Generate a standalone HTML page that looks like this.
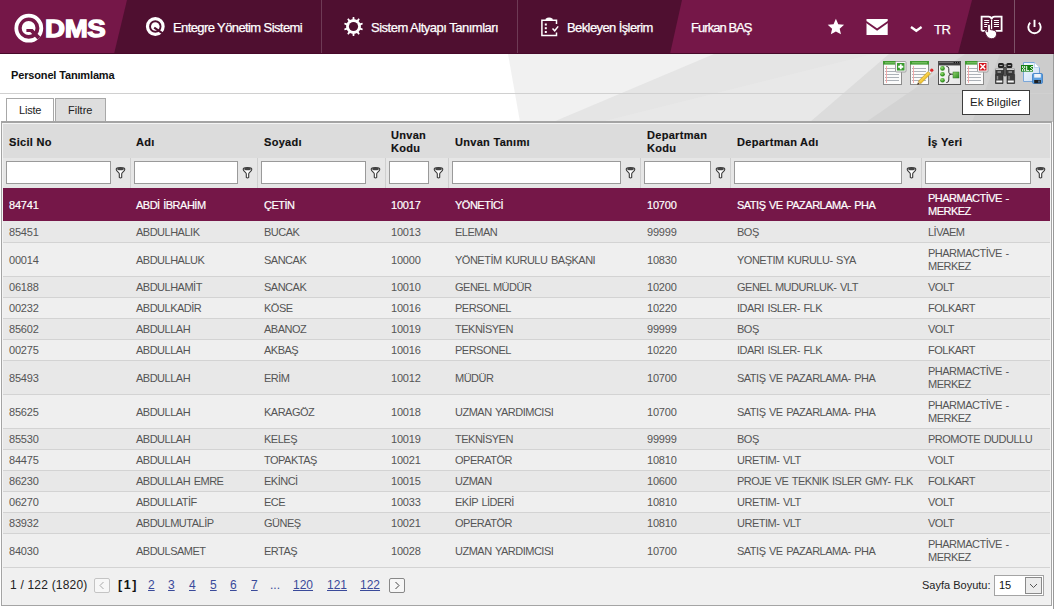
<!DOCTYPE html>
<html><head><meta charset="utf-8">
<style>
*{margin:0;padding:0;box-sizing:border-box}
html,body{width:1054px;height:609px;overflow:hidden;background:#fff;font-family:"Liberation Sans",sans-serif}
.a{position:absolute}
#hdr{position:absolute;left:0;top:0;width:1054px;height:54px;background:#4f0f30;overflow:hidden}
.mt{position:absolute;color:#fff;font-size:13px;white-space:nowrap;letter-spacing:-0.6px;top:20px;line-height:16px;-webkit-text-stroke:0.25px #fff}
.sep{position:absolute;top:0;width:1px;height:54px;background:#6e3a55}
#bg{position:absolute;left:0;top:54px;width:1054px;height:555px}
.tb{position:absolute;left:1px;top:121px;width:1051px;height:485px;border:1px solid #a4a4a4;border-top:2px solid #a4a4a4;background:#f0f0f0}
.th{position:absolute;top:123px;height:35px;background:#dcdcdc}
.hl{position:absolute;font-weight:bold;font-size:11px;color:#111;line-height:13px;white-space:nowrap;letter-spacing:0.3px;-webkit-text-stroke:0.15px #111}
.fr{position:absolute;top:158px;height:30px;background:#e6e6e6}
.inp{position:absolute;top:161px;height:23px;background:#fff;border:1px solid #9a9a9a}
.csep{position:absolute;width:1px;background:#cfcfcf}
.row{position:absolute;left:3px;width:1047px;border-bottom:1px solid #d3d3d3}
.c{position:absolute;font-size:11px;color:#555;white-space:nowrap;line-height:13px;letter-spacing:-0.5px;word-spacing:1px}
.n{letter-spacing:-0.2px}
.sel .c{color:#fff;-webkit-text-stroke:0.2px #fff}
.pg{position:absolute;top:578px;font-size:12px;color:#3a4a9a;line-height:14px;text-decoration:underline}
</style></head><body>
<div id="hdr">
  <svg class="a" style="left:0;top:0" width="1054" height="54">
    <polygon points="0,0 127,0 114,54 0,54" fill="#751748"/>
    <polygon points="682,0 972,0 958,54 670,54" fill="#751748"/>
  </svg>
  
  <svg class="a" style="left:0;top:0" width="1054" height="54">
    <!-- logo Q -->
    <circle cx="28.8" cy="28.2" r="12.5" fill="none" stroke="#fff" stroke-width="3.8"/>
    <circle cx="28.6" cy="28" r="6.9" fill="#fff"/>
    <path d="M26.4 29 H32.6 L40.5 36.8 L37.6 39.6 L30.2 32 H26.4 Z" fill="#751748"/>
    <text transform="translate(45,37) scale(1.13,1)" x="0" y="0" font-family="Liberation Sans" font-weight="bold" font-size="24.5" fill="#fff" stroke="#fff" stroke-width="1.3" letter-spacing="-0.3">DMS</text>
    <!-- menu Q -->
    <circle cx="155.3" cy="26.5" r="7.8" fill="none" stroke="#fff" stroke-width="3.2"/>
    <circle cx="155.3" cy="26.5" r="4.3" fill="#fff"/>
    <path d="M154.2 27.6 L164.5 34.6" stroke="#4f0f30" stroke-width="2.2"/>
    <!-- gear -->
    <path d="M352.48,19.17 L352.72,16.93 L354.28,16.93 L354.52,19.17 L355.79,19.46 L356.98,19.97 L358.49,18.30 L359.76,19.22 L358.63,21.17 L359.49,22.15 L360.16,23.27 L362.36,22.80 L362.84,24.29 L360.79,25.20 L360.90,26.50 L360.79,27.80 L362.84,28.71 L362.36,30.20 L360.16,29.73 L359.49,30.85 L358.63,31.83 L359.76,33.78 L358.49,34.70 L356.98,33.03 L355.79,33.54 L354.52,33.83 L354.28,36.07 L352.72,36.07 L352.48,33.83 L351.21,33.54 L350.02,33.03 L348.51,34.70 L347.24,33.78 L348.37,31.83 L347.51,30.85 L346.84,29.73 L344.64,30.20 L344.16,28.71 L346.21,27.80 L346.10,26.50 L346.21,25.20 L344.16,24.29 L344.64,22.80 L346.84,23.27 L347.51,22.15 L348.37,21.17 L347.24,19.22 L348.51,18.30 L350.02,19.97 L351.21,19.46 Z" fill="#fff"/>
    <circle cx="353.5" cy="26.5" r="4.6" fill="#4f0f30"/>
    <!-- clipboard -->
    <path d="M556.5 24 V20.2 H541.9 V35.5 H556.5 V32.5" fill="none" stroke="#fff" stroke-width="1.5"/>
    <path d="M545.6 20.5 V18.8 Q549 16.2 552.7 18.8 V20.5 Z" fill="#fff"/>
    <rect x="544.8" y="23.5" width="2" height="2" fill="#fff"/>
    <rect x="544.8" y="27.2" width="2" height="2" fill="#fff"/>
    <rect x="544.8" y="31" width="2" height="2" fill="#fff"/>
    <path d="M552.5 28.5 L554.7 30.8 L558.2 26.4" fill="none" stroke="#fff" stroke-width="1.5"/>
    <!-- star -->
    <polygon points="835.90,18.80 838.25,24.16 844.08,24.74 839.70,28.64 840.95,34.36 835.90,31.40 830.85,34.36 832.10,28.64 827.72,24.74 833.55,24.16" fill="#fff"/>
    <!-- mail -->
    <rect x="866.5" y="19" width="21.2" height="16" fill="#fff"/>
    <path d="M866 21.8 L877.1 29.6 L888.2 21.8" fill="none" stroke="#751748" stroke-width="1.8"/>
    <!-- chevron -->
    <path d="M911 27 L916.3 30.8 L921.6 27" fill="none" stroke="#fff" stroke-width="2.3"/>
    <!-- book -->
    <path d="M981.6 30.8 V16.6 H988.5 Q991.2 16.6 991.6 19.2 Q992 16.6 994.7 16.6 H1001.6 V30.8 H995.5 M987.2 30.8 H981.6" fill="none" stroke="#fff" stroke-width="1.8"/>
    <path d="M991.6 19.5 V29.5" stroke="#fff" stroke-width="1.2"/>
    <path d="M984.2 20.5 H989.2 M984.2 22.5 H989.2 M984.2 24.5 H987.4 M984.2 26.5 H987.4 M993.9 20.5 H999 M993.9 22.5 H999 M993.9 24.5 H999 M993.9 26.5 H999" stroke="#fff" stroke-width="1"/>
    <path d="M987.6 25 Q989 23.2 990.4 25 V29.6 L992.8 30 Q996.8 30.8 996.6 34.2 Q996 38.8 991.2 38.8 Q987.6 38.6 986 35 L984.6 31.6 Q984.6 30.2 986.2 30.8 L987.6 31.8 Z" fill="#fff" stroke="#4f0f30" stroke-width="0.9"/>
    <!-- power -->
    <path d="M1030.2 22.6 A6.2 6.2 0 1 0 1038.8 22.6" fill="none" stroke="#fff" stroke-width="1.9"/>
    <path d="M1034.5 19.8 V27" stroke="#fff" stroke-width="1.9"/>
  </svg>
  <div class="sep" style="left:321px"></div>
  <div class="sep" style="left:517px"></div>
  <div class="sep" style="left:1014px;background:#7d5268"></div>
  <div class="mt" style="left:173px">Entegre Yönetim Sistemi</div>
  <div class="mt" style="left:371px;letter-spacing:-0.5px">Sistem Altyapı Tanımları</div>
  <div class="mt" style="left:567px">Bekleyen İşlerim</div>
  <div class="mt" style="left:691px;letter-spacing:-0.95px">Furkan BAŞ</div>
  <div class="mt" style="left:934px;top:22px;letter-spacing:-0.4px">TR</div>
</div>
<div class="a" style="left:0;top:53px;width:1054px;height:1px;background:#47092a"></div>
<div class="a" style="left:0;top:54px;width:1054px;height:1px;background:#b4b8b6"></div>

<svg class="a" style="left:0;top:54px" width="1054" height="68">
  <rect x="0" y="0" width="1054" height="68" fill="#ffffff"/>
  <polygon points="508,0 1054,0 1054,68 520,68" fill="#f1f1f1"/>
  <polygon points="553,68 714,0 1054,0 1054,68" fill="#e5e5e5"/>
  <polygon points="601,68 873,0 1054,0 1054,68" fill="#e8e8e8"/>
  <polygon points="810,68 889,0 1054,0 1054,68" fill="#dcdcdc"/>
  <polygon points="866,68 965,0 1054,0 1054,68" fill="#d3d3d3"/>
  <polygon points="972,68 1000,0 1054,0 1054,68" fill="#cccccc"/>
</svg>
<!-- page title area -->
<div class="a" style="left:11px;top:69px;font-size:11px;font-weight:bold;color:#111;letter-spacing:-0.15px">Personel Tanımlama</div>
<div class="a" style="left:0;top:93px;width:1054px;height:1px;background:#d0d0d0"></div>


<svg class="a" style="left:0;top:0" width="1054" height="100">
  <!-- add -->
  <rect x="883.5" y="61.5" width="18" height="23" fill="#fbfbfb" stroke="#8c8c8c" stroke-width="1"/>
    <rect x="883" y="61" width="19" height="3.6" fill="#3f9a30"/>
    <path d="M885 62.8 H900" stroke="#8fd07a" stroke-width="0.9"/>
    <path d="M885 68.5 H899" stroke="#adb2b8" stroke-width="1"/><path d="M885 71.5 H899" stroke="#adb2b8" stroke-width="1"/><path d="M885 74.5 H899" stroke="#adb2b8" stroke-width="1"/><path d="M885 77.5 H899" stroke="#adb2b8" stroke-width="1"/><path d="M885 80.5 H899" stroke="#adb2b8" stroke-width="1"/>
    <path d="M886.5 66 V83" stroke="#f4a4a4" stroke-width="0.9"/>
  <rect x="895.5" y="61.5" width="10.5" height="10.5" rx="1" fill="#f4f4f4" stroke="#a0a0a0" stroke-width="1"/>
  <rect x="897" y="63" width="7.5" height="7.5" fill="#3a9a30"/>
  <path d="M900.75 64.2 V69.3 M898.2 66.75 H903.3" stroke="#fff" stroke-width="1.8"/>
  <!-- edit -->
  <rect x="910.5" y="61.5" width="18" height="23" fill="#fbfbfb" stroke="#8c8c8c" stroke-width="1"/>
    <rect x="910" y="61" width="19" height="3.6" fill="#3f9a30"/>
    <path d="M912 62.8 H927" stroke="#8fd07a" stroke-width="0.9"/>
    <path d="M912 68.5 H926" stroke="#adb2b8" stroke-width="1"/><path d="M912 71.5 H926" stroke="#adb2b8" stroke-width="1"/><path d="M912 74.5 H926" stroke="#adb2b8" stroke-width="1"/><path d="M912 77.5 H926" stroke="#adb2b8" stroke-width="1"/><path d="M912 80.5 H926" stroke="#adb2b8" stroke-width="1"/>
    <path d="M913.5 66 V83" stroke="#f4a4a4" stroke-width="0.9"/>
  <polygon points="917.50,84.50 920.96,83.44 918.56,81.04" fill="#e8c890" stroke="#a08050" stroke-width="0.4"/>
  <polygon points="917.29,84.71 919.23,83.97 918.03,82.77" fill="#111"/>
  <polygon points="920.96,83.44 930.72,73.68 928.32,71.28 918.56,81.04" fill="#f2c431" stroke="#b58a1a" stroke-width="0.5"/>
  <path d="M919.69,81.74 L929.10,72.34" stroke="#fbe27a" stroke-width="0.7"/>
  <polygon points="930.72,73.68 932.00,72.41 929.59,70.00 928.32,71.28" fill="#f6f6f6" stroke="#999" stroke-width="0.5"/>
  <circle cx="931.78" cy="70.22" r="1.6" fill="#e0262a"/>
  <!-- window -->
  <defs>
    <linearGradient id="tbar" x1="0" y1="0" x2="0" y2="1"><stop offset="0" stop-color="#8a8a8a"/><stop offset="0.5" stop-color="#333"/><stop offset="1" stop-color="#555"/></linearGradient>
    <linearGradient id="wbg" x1="0" y1="0" x2="1" y2="1"><stop offset="0" stop-color="#fafafa"/><stop offset="1" stop-color="#e6e6e6"/></linearGradient>
    <radialGradient id="gball" cx="0.4" cy="0.35" r="0.7"><stop offset="0" stop-color="#9be07a"/><stop offset="0.6" stop-color="#3f9e2a"/><stop offset="1" stop-color="#2a7a1c"/></radialGradient>
    <linearGradient id="gsq" x1="0" y1="0" x2="1" y2="1"><stop offset="0" stop-color="#8fd46a"/><stop offset="1" stop-color="#2d8a22"/></linearGradient>
  </defs>
  <rect x="938.5" y="61.5" width="22" height="23" fill="url(#wbg)" stroke="#505050" stroke-width="1"/>
  <rect x="939" y="62" width="21" height="3.5" fill="url(#tbar)"/>
  <circle cx="954.3" cy="62.6" r="0.7" fill="#000"/><circle cx="956.5" cy="62.6" r="0.7" fill="#000"/><circle cx="958.7" cy="62.6" r="0.7" fill="#000"/>
  <circle cx="942.5" cy="68.4" r="2.3" fill="url(#gball)"/>
  <circle cx="942.5" cy="74.3" r="2.3" fill="url(#gball)"/>
  <circle cx="942.5" cy="80.2" r="2.3" fill="url(#gball)"/>
  <path d="M946.3 66.3 Q948.8 66.3 948.8 68.8 V72.3 Q948.8 74.2 951.5 74.2 H953 M951.5 74.2 Q948.8 74.2 948.8 76.3 V80 Q948.8 82.6 946.3 82.6" fill="none" stroke="#222" stroke-width="0.9"/>
  <rect x="953" y="72" width="6" height="6" fill="url(#gsq)" stroke="#2d7a22" stroke-width="0.5"/>
  <!-- delete -->
  <rect x="965.5" y="61.5" width="18" height="23" fill="#fbfbfb" stroke="#8c8c8c" stroke-width="1"/>
    <rect x="965" y="61" width="19" height="3.6" fill="#3f9a30"/>
    <path d="M967 62.8 H982" stroke="#8fd07a" stroke-width="0.9"/>
    <path d="M967 68.5 H981" stroke="#adb2b8" stroke-width="1"/><path d="M967 71.5 H981" stroke="#adb2b8" stroke-width="1"/><path d="M967 74.5 H981" stroke="#adb2b8" stroke-width="1"/><path d="M967 77.5 H981" stroke="#adb2b8" stroke-width="1"/><path d="M967 80.5 H981" stroke="#adb2b8" stroke-width="1"/>
    <path d="M968.5 66 V83" stroke="#f4a4a4" stroke-width="0.9"/>
  <rect x="977.5" y="61.5" width="10.5" height="10.5" rx="1" fill="#f4f4f4" stroke="#a0a0a0" stroke-width="1"/>
  <rect x="979" y="63" width="7.5" height="7.5" fill="#d2111a"/>
  <path d="M980.3 64.3 L985.2 69.2 M985.2 64.3 L980.3 69.2" stroke="#fff" stroke-width="1.6"/>
  <!-- binoculars -->
  <rect x="998" y="63" width="6" height="5" rx="1.5" fill="#222"/>
  <rect x="1006.3" y="63" width="6" height="5" rx="1.5" fill="#222"/>
  <path d="M999.5 65.5 H1002.5 M1007.8 65.5 H1010.8" stroke="#aaa" stroke-width="1"/>
  <path d="M1004 65 H1006.3" stroke="#444" stroke-width="1"/>
  <rect x="995.3" y="68.5" width="19.3" height="6" rx="0.5" fill="#3a3a3a"/>
  <path d="M995.5 69.2 H1014.4" stroke="#f4f4f4" stroke-width="1.2"/>
  <path d="M997.5 72 H1001 M1008.5 72 H1012" stroke="#9a9a9a" stroke-width="1.6"/>
  <rect x="1003.5" y="67" width="3" height="9" rx="1" fill="#555" stroke="#222" stroke-width="0.5"/>
  <path d="M995.5 74.5 H1003 V83.5 H995.5 Z M1007 74.5 H1014.6 V83.5 H1007 Z" fill="#3c3c3c" stroke="#1a1a1a" stroke-width="0.6"/>
  <path d="M997.5 76 V79.5 M1009 76 V79.5" stroke="#8a8a8a" stroke-width="1.4"/>
  <path d="M996.3 81.5 H1002.3 M1007.8 81.5 H1013.8" stroke="#f6f6f6" stroke-width="2"/>
  <!-- xls -->
  <defs><linearGradient id="docb" x1="0" y1="0" x2="1" y2="1"><stop offset="0" stop-color="#f4f9ff"/><stop offset="1" stop-color="#c8dcf2"/></linearGradient></defs>
  <path d="M1023.5 62.5 H1034.5 L1039.5 67.5 V81.5 H1023.5 Z" fill="url(#docb)" stroke="#7aa6d8" stroke-width="1"/>
  <path d="M1034.5 62.5 V67.5 H1039.5" fill="#fff" stroke="#9cbde3" stroke-width="0.6"/>
  <rect x="1021" y="65" width="12" height="6.6" fill="#128012"/>
  <rect x="1022.2" y="66" width="1" height="1" fill="#fff"/><rect x="1024.2" y="66" width="1" height="1" fill="#fff"/><rect x="1022.2" y="67" width="1" height="1" fill="#fff"/><rect x="1024.2" y="67" width="1" height="1" fill="#fff"/><rect x="1023.2" y="68" width="1" height="1" fill="#fff"/><rect x="1022.2" y="69" width="1" height="1" fill="#fff"/><rect x="1024.2" y="69" width="1" height="1" fill="#fff"/><rect x="1022.2" y="70" width="1" height="1" fill="#fff"/><rect x="1024.2" y="70" width="1" height="1" fill="#fff"/><rect x="1026.2" y="66" width="1" height="1" fill="#fff"/><rect x="1026.2" y="67" width="1" height="1" fill="#fff"/><rect x="1026.2" y="68" width="1" height="1" fill="#fff"/><rect x="1026.2" y="69" width="1" height="1" fill="#fff"/><rect x="1026.2" y="70" width="1" height="1" fill="#fff"/><rect x="1027.2" y="70" width="1" height="1" fill="#fff"/><rect x="1028.2" y="70" width="1" height="1" fill="#fff"/><rect x="1031.2" y="66" width="1" height="1" fill="#fff"/><rect x="1032.2" y="66" width="1" height="1" fill="#fff"/><rect x="1030.2" y="67" width="1" height="1" fill="#fff"/><rect x="1031.2" y="68" width="1" height="1" fill="#fff"/><rect x="1032.2" y="69" width="1" height="1" fill="#fff"/><rect x="1030.2" y="70" width="1" height="1" fill="#fff"/><rect x="1031.2" y="70" width="1" height="1" fill="#fff"/>
  <rect x="1032.5" y="73.5" width="10" height="10" rx="1.2" fill="#5c9fe0" stroke="#3a7cc4" stroke-width="0.8"/>
  <rect x="1034.2" y="74" width="6.6" height="3.6" fill="#eef3f8"/>
  <rect x="1034.2" y="80" width="6.6" height="3.3" fill="#1e1e1e"/>
  <rect x="1038.5" y="80.6" width="1" height="2" fill="#6aa8e6"/>
</svg>
<div class="a" style="left:962px;top:90px;width:68px;height:25px;background:#fff;border:1px solid #3c3c3c;z-index:5"></div>
<div class="a" style="left:970px;top:95px;font-size:11.5px;color:#222;z-index:6;line-height:14px">Ek Bilgiler</div>

<!-- tabs -->
<div class="a" style="left:6px;top:98px;width:48px;height:23px;background:#fff;border:1px solid #a8a8a8;border-bottom:none"></div>
<div class="a" style="left:19px;top:104px;font-size:11px;color:#222;letter-spacing:-0.2px">Liste</div>
<div class="a" style="left:55px;top:98px;width:51px;height:23px;background:#dedede;border:1px solid #a8a8a8;border-bottom:none"></div>
<div class="a" style="left:68px;top:104px;font-size:11px;color:#222">Filtre</div>

<!-- table -->
<div class="tb"></div>
<div class="a" style="left:2px;top:123px;width:1049px;height:1px;background:#f4f4f4"></div>
<div class="a" style="left:2px;top:123px;width:1px;height:482px;background:#f4f4f4"></div>
<div class="a" style="left:1050px;top:123px;width:1px;height:482px;background:#f4f4f4"></div>
<div class="th" style="left:3px;top:124px;height:34px;width:1047px"></div>
<div class="fr" style="left:3px;width:1047px;height:30px"></div>
<div class="a" style="left:1053px;top:54px;width:1px;height:555px;background:#9a9a9a"></div>
<!-- pagination -->
<div class="a" style="left:10px;top:578px;font-size:12px;color:#222;line-height:14px;letter-spacing:0.2px">1 / 122 (1820)</div>
<div class="a" style="left:94px;top:578px;width:16px;height:15px;border:1px solid #c4c4c4;border-radius:2px;background:#f7f7f7"></div>
<svg class="a" style="left:94px;top:578px" width="16" height="15"><path d="M9.5 4 L6 7.5 L9.5 11" fill="none" stroke="#aaa" stroke-width="1"/></svg>
<div class="a" style="left:118px;top:578px;font-size:12.5px;font-weight:bold;color:#111;line-height:14px;letter-spacing:1.6px">[1]</div>
<div class="pg" style="left:148px">2</div>
<div class="pg" style="left:168px">3</div>
<div class="pg" style="left:189px">4</div>
<div class="pg" style="left:210px">5</div>
<div class="pg" style="left:230px">6</div>
<div class="pg" style="left:251px">7</div>
<div class="a" style="left:270px;top:578px;font-size:12px;color:#3a4a9a;line-height:14px">...</div>
<div class="pg" style="left:293px">120</div>
<div class="pg" style="left:327px">121</div>
<div class="pg" style="left:360px">122</div>
<div class="a" style="left:389px;top:578px;width:16px;height:15px;border:1px solid #888;border-radius:2px;background:#f7f7f7"></div>
<svg class="a" style="left:389px;top:578px" width="16" height="15"><path d="M6.5 4 L10 7.5 L6.5 11" fill="none" stroke="#444" stroke-width="1"/></svg>
<div class="a" style="left:922px;top:579px;font-size:11px;color:#222;line-height:13px;letter-spacing:0px">Sayfa Boyutu:</div>
<div class="a" style="left:994px;top:575px;width:50px;height:21px;border:1px solid #a4a4a4;background:#fff"></div>
<div class="a" style="left:999px;top:579px;font-size:11px;color:#111;line-height:13px">15</div>
<div class="a" style="left:1025px;top:577px;width:17px;height:17px;border:1px solid #8a8a8a;background:#ececec"></div>
<svg class="a" style="left:1025px;top:577px" width="17" height="17"><path d="M5 7 L8.5 10.5 L12 7" fill="none" stroke="#555" stroke-width="1"/></svg>

<div class="hl" style="left:9px;top:136px">Sicil No</div>
<div class="hl" style="left:136px;top:136px">Adı</div>
<div class="hl" style="left:264px;top:136px">Soyadı</div>
<div class="hl" style="left:391px;top:129px">Unvan<br>Kodu</div>
<div class="hl" style="left:455px;top:136px">Unvan Tanımı</div>
<div class="hl" style="left:647px;top:129px">Departman<br>Kodu</div>
<div class="hl" style="left:737px;top:136px">Departman Adı</div>
<div class="hl" style="left:928px;top:136px">İş Yeri</div>
<div class="inp" style="left:6px;width:105px"></div>
<svg class="a" style="left:115px;top:166px" width="11" height="13" viewBox="0 0 11 13"><path d="M1.2 3.3 C1.2 0.9 9.8 0.9 9.8 3.3 C9.8 5.3 6.8 6.2 6.7 7.8 V11.3 Q5.5 12.6 4.3 11.3 V7.8 C4.2 6.2 1.2 5.3 1.2 3.3 Z" fill="#fff" stroke="#3a3a3a" stroke-width="1.1"/><ellipse cx="5.5" cy="2.9" rx="3.4" ry="1.3" fill="#444"/></svg>
<div class="inp" style="left:134px;width:104px"></div>
<svg class="a" style="left:242px;top:166px" width="11" height="13" viewBox="0 0 11 13"><path d="M1.2 3.3 C1.2 0.9 9.8 0.9 9.8 3.3 C9.8 5.3 6.8 6.2 6.7 7.8 V11.3 Q5.5 12.6 4.3 11.3 V7.8 C4.2 6.2 1.2 5.3 1.2 3.3 Z" fill="#fff" stroke="#3a3a3a" stroke-width="1.1"/><ellipse cx="5.5" cy="2.9" rx="3.4" ry="1.3" fill="#444"/></svg>
<div class="inp" style="left:261px;width:105px"></div>
<svg class="a" style="left:370px;top:166px" width="11" height="13" viewBox="0 0 11 13"><path d="M1.2 3.3 C1.2 0.9 9.8 0.9 9.8 3.3 C9.8 5.3 6.8 6.2 6.7 7.8 V11.3 Q5.5 12.6 4.3 11.3 V7.8 C4.2 6.2 1.2 5.3 1.2 3.3 Z" fill="#fff" stroke="#3a3a3a" stroke-width="1.1"/><ellipse cx="5.5" cy="2.9" rx="3.4" ry="1.3" fill="#444"/></svg>
<div class="inp" style="left:389px;width:40px"></div>
<svg class="a" style="left:433px;top:166px" width="11" height="13" viewBox="0 0 11 13"><path d="M1.2 3.3 C1.2 0.9 9.8 0.9 9.8 3.3 C9.8 5.3 6.8 6.2 6.7 7.8 V11.3 Q5.5 12.6 4.3 11.3 V7.8 C4.2 6.2 1.2 5.3 1.2 3.3 Z" fill="#fff" stroke="#3a3a3a" stroke-width="1.1"/><ellipse cx="5.5" cy="2.9" rx="3.4" ry="1.3" fill="#444"/></svg>
<div class="inp" style="left:452px;width:169px"></div>
<svg class="a" style="left:625px;top:166px" width="11" height="13" viewBox="0 0 11 13"><path d="M1.2 3.3 C1.2 0.9 9.8 0.9 9.8 3.3 C9.8 5.3 6.8 6.2 6.7 7.8 V11.3 Q5.5 12.6 4.3 11.3 V7.8 C4.2 6.2 1.2 5.3 1.2 3.3 Z" fill="#fff" stroke="#3a3a3a" stroke-width="1.1"/><ellipse cx="5.5" cy="2.9" rx="3.4" ry="1.3" fill="#444"/></svg>
<div class="inp" style="left:644px;width:67px"></div>
<svg class="a" style="left:715px;top:166px" width="11" height="13" viewBox="0 0 11 13"><path d="M1.2 3.3 C1.2 0.9 9.8 0.9 9.8 3.3 C9.8 5.3 6.8 6.2 6.7 7.8 V11.3 Q5.5 12.6 4.3 11.3 V7.8 C4.2 6.2 1.2 5.3 1.2 3.3 Z" fill="#fff" stroke="#3a3a3a" stroke-width="1.1"/><ellipse cx="5.5" cy="2.9" rx="3.4" ry="1.3" fill="#444"/></svg>
<div class="inp" style="left:734px;width:168px"></div>
<svg class="a" style="left:906px;top:166px" width="11" height="13" viewBox="0 0 11 13"><path d="M1.2 3.3 C1.2 0.9 9.8 0.9 9.8 3.3 C9.8 5.3 6.8 6.2 6.7 7.8 V11.3 Q5.5 12.6 4.3 11.3 V7.8 C4.2 6.2 1.2 5.3 1.2 3.3 Z" fill="#fff" stroke="#3a3a3a" stroke-width="1.1"/><ellipse cx="5.5" cy="2.9" rx="3.4" ry="1.3" fill="#444"/></svg>
<div class="inp" style="left:925px;width:106px"></div>
<svg class="a" style="left:1035px;top:166px" width="11" height="13" viewBox="0 0 11 13"><path d="M1.2 3.3 C1.2 0.9 9.8 0.9 9.8 3.3 C9.8 5.3 6.8 6.2 6.7 7.8 V11.3 Q5.5 12.6 4.3 11.3 V7.8 C4.2 6.2 1.2 5.3 1.2 3.3 Z" fill="#fff" stroke="#3a3a3a" stroke-width="1.1"/><ellipse cx="5.5" cy="2.9" rx="3.4" ry="1.3" fill="#444"/></svg>
<div class="csep" style="left:130px;top:158px;height:30px"></div>
<div class="csep" style="left:257px;top:158px;height:30px"></div>
<div class="csep" style="left:385px;top:158px;height:30px"></div>
<div class="csep" style="left:448px;top:158px;height:30px"></div>
<div class="csep" style="left:640px;top:158px;height:30px"></div>
<div class="csep" style="left:730px;top:158px;height:30px"></div>
<div class="csep" style="left:921px;top:158px;height:30px"></div>
<div class="row sel" style="top:188px;height:33px;background:#751748;border-bottom:none">
<div class="c n" style="left:6px;top:11px">84741</div>
<div class="c" style="left:133px;top:11px">ABDİ İBRAHİM</div>
<div class="c" style="left:261px;top:11px">ÇETİN</div>
<div class="c n" style="left:388px;top:11px">10017</div>
<div class="c" style="left:452px;top:11px">YÖNETİCİ</div>
<div class="c n" style="left:644px;top:11px">10700</div>
<div class="c" style="left:734px;top:11px">SATIŞ VE PAZARLAMA- PHA</div>
<div class="c" style="left:925px;top:4px">PHARMACTİVE -<br>MERKEZ</div>
</div>
<div class="row" style="top:221px;height:22px;background:#e8e8e8">
<div class="c n" style="left:6px;top:5px">85451</div>
<div class="c" style="left:133px;top:5px">ABDULHALIK</div>
<div class="c" style="left:261px;top:5px">BUCAK</div>
<div class="c n" style="left:388px;top:5px">10013</div>
<div class="c" style="left:452px;top:5px">ELEMAN</div>
<div class="c n" style="left:644px;top:5px">99999</div>
<div class="c" style="left:734px;top:5px">BOŞ</div>
<div class="c" style="left:925px;top:5px">LİVAEM</div>
</div>
<div class="row" style="top:243px;height:34px;background:#efefef">
<div class="c n" style="left:6px;top:11px">00014</div>
<div class="c" style="left:133px;top:11px">ABDULHALUK</div>
<div class="c" style="left:261px;top:11px">SANCAK</div>
<div class="c n" style="left:388px;top:11px">10000</div>
<div class="c" style="left:452px;top:11px">YÖNETİM KURULU BAŞKANI</div>
<div class="c n" style="left:644px;top:11px">10830</div>
<div class="c" style="left:734px;top:11px">YONETIM KURULU- SYA</div>
<div class="c" style="left:925px;top:4px">PHARMACTİVE -<br>MERKEZ</div>
</div>
<div class="row" style="top:277px;height:21px;background:#e8e8e8">
<div class="c n" style="left:6px;top:4px">06188</div>
<div class="c" style="left:133px;top:4px">ABDULHAMİT</div>
<div class="c" style="left:261px;top:4px">SANCAK</div>
<div class="c n" style="left:388px;top:4px">10010</div>
<div class="c" style="left:452px;top:4px">GENEL MÜDÜR</div>
<div class="c n" style="left:644px;top:4px">10200</div>
<div class="c" style="left:734px;top:4px">GENEL MUDURLUK- VLT</div>
<div class="c" style="left:925px;top:4px">VOLT</div>
</div>
<div class="row" style="top:298px;height:21px;background:#efefef">
<div class="c n" style="left:6px;top:4px">00232</div>
<div class="c" style="left:133px;top:4px">ABDULKADİR</div>
<div class="c" style="left:261px;top:4px">KÖSE</div>
<div class="c n" style="left:388px;top:4px">10016</div>
<div class="c" style="left:452px;top:4px">PERSONEL</div>
<div class="c n" style="left:644px;top:4px">10220</div>
<div class="c" style="left:734px;top:4px">IDARI ISLER- FLK</div>
<div class="c" style="left:925px;top:4px">FOLKART</div>
</div>
<div class="row" style="top:319px;height:21px;background:#e8e8e8">
<div class="c n" style="left:6px;top:4px">85602</div>
<div class="c" style="left:133px;top:4px">ABDULLAH</div>
<div class="c" style="left:261px;top:4px">ABANOZ</div>
<div class="c n" style="left:388px;top:4px">10019</div>
<div class="c" style="left:452px;top:4px">TEKNİSYEN</div>
<div class="c n" style="left:644px;top:4px">99999</div>
<div class="c" style="left:734px;top:4px">BOŞ</div>
<div class="c" style="left:925px;top:4px">VOLT</div>
</div>
<div class="row" style="top:340px;height:21px;background:#efefef">
<div class="c n" style="left:6px;top:4px">00275</div>
<div class="c" style="left:133px;top:4px">ABDULLAH</div>
<div class="c" style="left:261px;top:4px">AKBAŞ</div>
<div class="c n" style="left:388px;top:4px">10016</div>
<div class="c" style="left:452px;top:4px">PERSONEL</div>
<div class="c n" style="left:644px;top:4px">10220</div>
<div class="c" style="left:734px;top:4px">IDARI ISLER- FLK</div>
<div class="c" style="left:925px;top:4px">FOLKART</div>
</div>
<div class="row" style="top:361px;height:34px;background:#e8e8e8">
<div class="c n" style="left:6px;top:11px">85493</div>
<div class="c" style="left:133px;top:11px">ABDULLAH</div>
<div class="c" style="left:261px;top:11px">ERİM</div>
<div class="c n" style="left:388px;top:11px">10012</div>
<div class="c" style="left:452px;top:11px">MÜDÜR</div>
<div class="c n" style="left:644px;top:11px">10700</div>
<div class="c" style="left:734px;top:11px">SATIŞ VE PAZARLAMA- PHA</div>
<div class="c" style="left:925px;top:4px">PHARMACTİVE -<br>MERKEZ</div>
</div>
<div class="row" style="top:395px;height:34px;background:#efefef">
<div class="c n" style="left:6px;top:11px">85625</div>
<div class="c" style="left:133px;top:11px">ABDULLAH</div>
<div class="c" style="left:261px;top:11px">KARAGÖZ</div>
<div class="c n" style="left:388px;top:11px">10018</div>
<div class="c" style="left:452px;top:11px">UZMAN YARDIMCISI</div>
<div class="c n" style="left:644px;top:11px">10700</div>
<div class="c" style="left:734px;top:11px">SATIŞ VE PAZARLAMA- PHA</div>
<div class="c" style="left:925px;top:4px">PHARMACTİVE -<br>MERKEZ</div>
</div>
<div class="row" style="top:429px;height:21px;background:#e8e8e8">
<div class="c n" style="left:6px;top:4px">85530</div>
<div class="c" style="left:133px;top:4px">ABDULLAH</div>
<div class="c" style="left:261px;top:4px">KELEŞ</div>
<div class="c n" style="left:388px;top:4px">10019</div>
<div class="c" style="left:452px;top:4px">TEKNİSYEN</div>
<div class="c n" style="left:644px;top:4px">99999</div>
<div class="c" style="left:734px;top:4px">BOŞ</div>
<div class="c" style="left:925px;top:4px">PROMOTE DUDULLU</div>
</div>
<div class="row" style="top:450px;height:21px;background:#efefef">
<div class="c n" style="left:6px;top:4px">84475</div>
<div class="c" style="left:133px;top:4px">ABDULLAH</div>
<div class="c" style="left:261px;top:4px">TOPAKTAŞ</div>
<div class="c n" style="left:388px;top:4px">10021</div>
<div class="c" style="left:452px;top:4px">OPERATÖR</div>
<div class="c n" style="left:644px;top:4px">10810</div>
<div class="c" style="left:734px;top:4px">URETIM- VLT</div>
<div class="c" style="left:925px;top:4px">VOLT</div>
</div>
<div class="row" style="top:471px;height:21px;background:#e8e8e8">
<div class="c n" style="left:6px;top:4px">86230</div>
<div class="c" style="left:133px;top:4px">ABDULLAH EMRE</div>
<div class="c" style="left:261px;top:4px">EKİNCİ</div>
<div class="c n" style="left:388px;top:4px">10015</div>
<div class="c" style="left:452px;top:4px">UZMAN</div>
<div class="c n" style="left:644px;top:4px">10600</div>
<div class="c" style="left:734px;top:4px">PROJE VE TEKNIK ISLER GMY- FLK</div>
<div class="c" style="left:925px;top:4px">FOLKART</div>
</div>
<div class="row" style="top:492px;height:21px;background:#efefef">
<div class="c n" style="left:6px;top:4px">06270</div>
<div class="c" style="left:133px;top:4px">ABDULLATİF</div>
<div class="c" style="left:261px;top:4px">ECE</div>
<div class="c n" style="left:388px;top:4px">10033</div>
<div class="c" style="left:452px;top:4px">EKİP LİDERİ</div>
<div class="c n" style="left:644px;top:4px">10810</div>
<div class="c" style="left:734px;top:4px">URETIM- VLT</div>
<div class="c" style="left:925px;top:4px">VOLT</div>
</div>
<div class="row" style="top:513px;height:21px;background:#e8e8e8">
<div class="c n" style="left:6px;top:4px">83932</div>
<div class="c" style="left:133px;top:4px">ABDULMUTALİP</div>
<div class="c" style="left:261px;top:4px">GÜNEŞ</div>
<div class="c n" style="left:388px;top:4px">10021</div>
<div class="c" style="left:452px;top:4px">OPERATÖR</div>
<div class="c n" style="left:644px;top:4px">10810</div>
<div class="c" style="left:734px;top:4px">URETIM- VLT</div>
<div class="c" style="left:925px;top:4px">VOLT</div>
</div>
<div class="row" style="top:534px;height:34px;background:#efefef">
<div class="c n" style="left:6px;top:11px">84030</div>
<div class="c" style="left:133px;top:11px">ABDULSAMET</div>
<div class="c" style="left:261px;top:11px">ERTAŞ</div>
<div class="c n" style="left:388px;top:11px">10028</div>
<div class="c" style="left:452px;top:11px">UZMAN YARDIMCISI</div>
<div class="c n" style="left:644px;top:11px">10700</div>
<div class="c" style="left:734px;top:11px">SATIŞ VE PAZARLAMA- PHA</div>
<div class="c" style="left:925px;top:4px">PHARMACTİVE -<br>MERKEZ</div>
</div>

</body></html>
